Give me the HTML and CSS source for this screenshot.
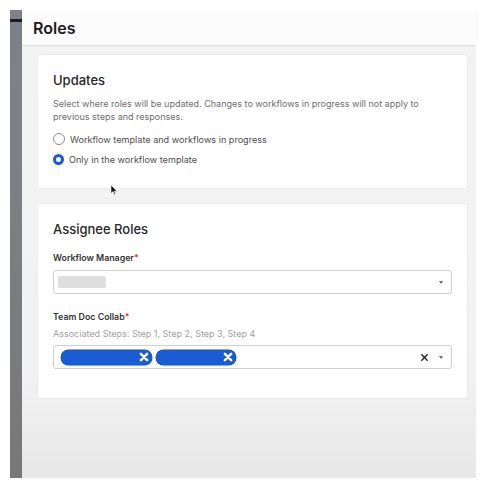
FILE: index.html
```html
<!DOCTYPE html>
<html>
<head>
<meta charset="utf-8">
<link rel="stylesheet" href="styles.css">
</head>
<body>
<div class="frame">
  <div class="rail"><div class="rail-mark"></div></div>
  <div class="main">
    <div class="header"><h1 class="title">Roles</h1></div>
    <div class="content">
      <section class="card card-updates">
        <h2 class="card-title">Updates</h2>
        <p class="desc">Select where roles will be updated. Changes to workflows in progress will not apply to<br>previous steps and responses.</p>
        <div class="radio-row"><span class="radio"></span><span class="radio-label">Workflow template and workflows in progress</span></div>
        <div class="radio-row"><span class="radio radio-on"></span><span class="radio-label">Only in the workflow template</span></div>
      </section>
      <section class="card card-roles">
        <h2 class="card-title">Assignee Roles</h2>
        <div class="field-label">Workflow Manager<span class="req">*</span></div>
        <div class="select">
          <span class="placeholder-box"></span>
          <span class="spacer"></span>
          <span class="caret"></span>
        </div>
        <div class="field-label field-label-2">Team Doc Collab<span class="req">*</span></div>
        <div class="hint">Associated Steps: Step 1, Step 2, Step 3, Step 4</div>
        <div class="select select-multi">
          <span class="chip chip-a"><svg class="chip-x" viewBox="0 0 8 8"><path d="M1.5 1.5 L6.5 6.5 M6.5 1.5 L1.5 6.5"/></svg></span>
          <span class="chip chip-b"><svg class="chip-x" viewBox="0 0 8 8"><path d="M1.5 1.5 L6.5 6.5 M6.5 1.5 L1.5 6.5"/></svg></span>
          <span class="spacer"></span>
          <svg class="clear-x" viewBox="0 0 10 10"><path d="M1.5 1.5 L8.5 8.5 M8.5 1.5 L1.5 8.5"/></svg>
          <span class="caret"></span>
        </div>
      </section>
    </div>
  </div>
</div>
<svg class="cursor" viewBox="0 0 8 12"><path d="M1 1 L1 9.5 L3 7.6 L4.4 10.8 L5.6 10.3 L4.3 7.2 L7 7.2 Z"/></svg>
</body>
</html>
```
FILE: styles.css
```css
html, body {
  margin: 0;
  padding: 0;
  background: #ffffff;
  font-family: "Inter", "Noto Sans", sans-serif;
}
.frame {
  position: relative;
  margin: 10px 10px 0 10px;
  width: 466px;
  height: 468px;
  display: flex;
}
.rail {
  width: 12px;
  background: linear-gradient(to bottom, #7e8189 0%, #7d7f84 40%, #787878 100%);
  flex: none;
}
.rail-mark {
  margin-top: 9px;
  height: 3px;
  background: #1d1d1d;
}
.main {
  flex: 1;
  display: flex;
  flex-direction: column;
  background: linear-gradient(to bottom, #f3f3f3 0%, #f2f2f2 78%, #e7e7e7 100%);
}
.header {
  height: 35px;
  background: #fcfcfc;
  box-shadow: 0 1px 2px rgba(0,0,0,0.10);
  display: flex;
  align-items: center;
  padding-left: 11px;
  position: relative;
}
.title {
  margin: 0;
  font-size: 16px;
  font-weight: 600;
  color: #1b1b1b;
}
.content {
  padding: 10px 9px 0 16px;
  display: flex;
  flex-direction: column;
  gap: 16px;
}
.card {
  background: #ffffff;
  border-radius: 3px;
  box-shadow: 0 0 2px rgba(0,0,0,0.10);
  padding: 16px 15px 19px 15px;
}
.card-roles {
  padding-bottom: 29px;
}
.card-title {
  margin: 0;
  font-size: 13px;
  line-height: 18px;
  font-weight: 500;
  color: #262626;
}
.desc {
  margin: 8px 0 6px 0;
  font-size: 9px;
  line-height: 13px;
  color: #6e6e6e;
}
.radio-row {
  display: flex;
  align-items: center;
  height: 20px;
  gap: 5px;
}
.radio {
  width: 10px;
  height: 10px;
  border: 1.3px solid #8a8a8a;
  border-radius: 50%;
  box-sizing: content-box;
  background: #fff;
}
.radio-on {
  width: 5px;
  height: 5px;
  border: 3.8px solid #1a5ad6;
}
.radio-label {
  font-size: 9.1px;
  color: #4e4e4e;
}
.field-label {
  margin-top: 14px;
  font-size: 8.8px;
  line-height: 12px;
  font-weight: 600;
  color: #333;
}
.field-label-2 {
  margin-top: 17px;
}
.req {
  color: #d0302a;
}
.hint {
  margin-top: 5px;
  font-size: 9px;
  line-height: 12px;
  color: #a0a0a0;
}
.select {
  margin-top: 6px;
  height: 22px;
  border: 1px solid #cfcfcf;
  border-radius: 3px;
  display: flex;
  align-items: center;
  padding: 0 8px 0 4px;
  gap: 4px;
}
.select-multi {
  margin-top: 5px;
  height: 22px;
  padding-left: 7px;
}
.placeholder-box {
  width: 48px;
  height: 12px;
  background: #dedede;
  border-radius: 2px;
}
.spacer {
  flex: 1;
}
.caret {
  width: 0;
  height: 0;
  border-left: 2.5px solid transparent;
  border-right: 2.5px solid transparent;
  border-top: 3px solid #6b6b6b;
  margin-left: 6px;
}
.chip {
  height: 15px;
  border-radius: 8px;
  background: #1a5cd4;
  display: flex;
  align-items: center;
  justify-content: flex-end;
  padding-right: 3px;
  box-sizing: border-box;
  box-shadow: 0 0 0 0.5px #1448a8;
}
.chip-a { width: 91px; }
.chip-b { width: 80px; }
.chip-x {
  width: 10px;
  height: 10px;
  stroke: #ffffff;
  stroke-width: 2;
  fill: none;
  stroke-linecap: round;
}
.clear-x {
  width: 9px;
  height: 9px;
  stroke: #222;
  stroke-width: 1.5;
  fill: none;
}
.cursor {
  position: absolute;
  left: 110px;
  top: 184px;
  width: 8px;
  height: 12px;
  fill: #111;
  stroke: #fff;
  stroke-width: 0.6;
}
```
